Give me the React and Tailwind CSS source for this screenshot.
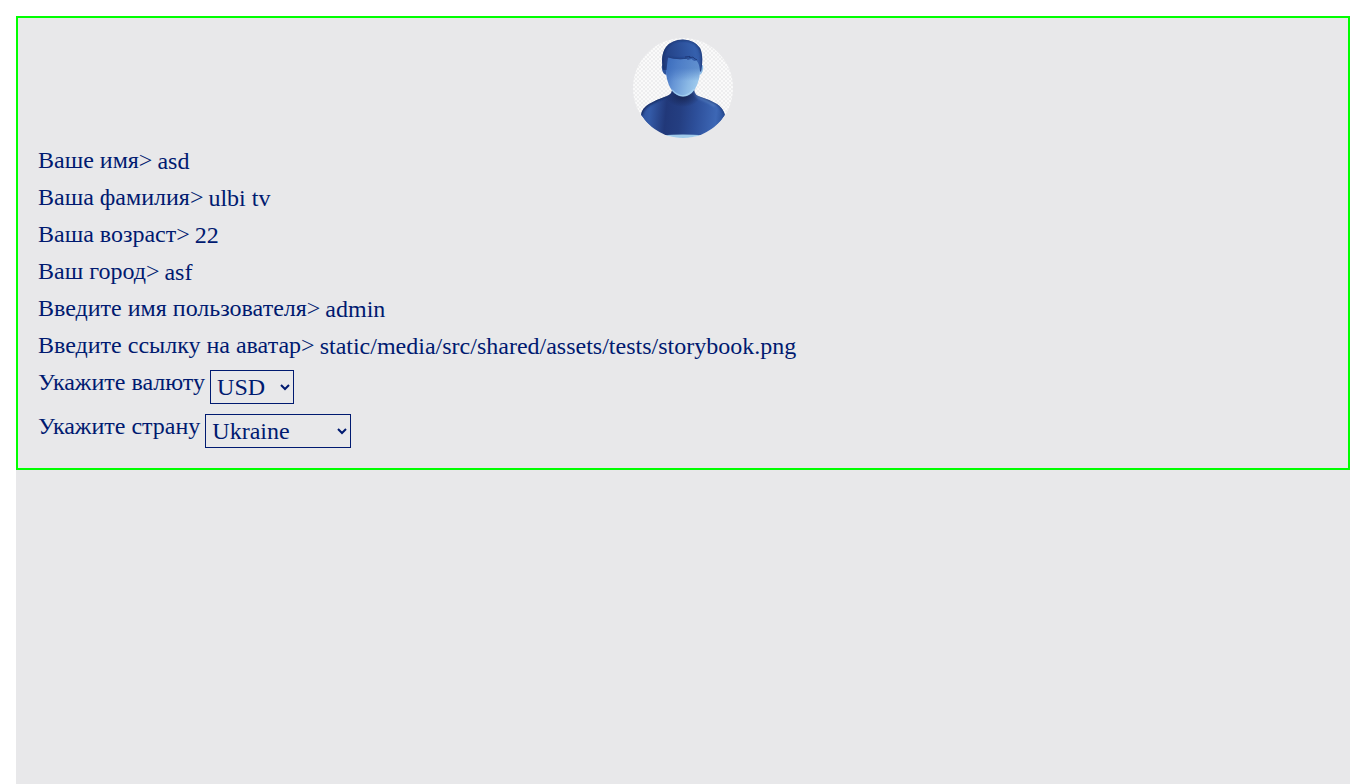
const fields = [
  ['Ваше имя>', 'asd'],
  ['Ваша фамилия>', 'ulbi tv'],
  ['Ваша возраст>', '22'],
  ['Ваш город>', 'asf'],
  ['Введите имя пользователя>', 'admin'],
  ['Введите ссылку на аватар>', 'static/media/src/shared/assets/tests/storybook.png'],
];

function Avatar() {
  return (
    <svg className="block size-[100px] rounded-full" viewBox="0 0 100 100" role="img">
      <defs>
        <pattern id="checks" width="4" height="4" patternUnits="userSpaceOnUse">
          <rect width="4" height="4" fill="#fafafa" />
          <rect width="2" height="2" fill="#eeeeef" />
          <rect x="2" y="2" width="2" height="2" fill="#eeeeef" />
        </pattern>
        <filter id="soft" x="-20%" y="-20%" width="140%" height="140%">
          <feGaussianBlur stdDeviation="0.9" />
        </filter>
        <linearGradient id="face" x1="0" y1="0.3" x2="1" y2="0.6">
          <stop offset="0" stopColor="#3f6fbe" />
          <stop offset="0.3" stopColor="#6594d5" />
          <stop offset="0.7" stopColor="#8ab8e5" />
          <stop offset="1" stopColor="#a2cdee" />
        </linearGradient>
        <linearGradient id="brow" x1="0" y1="0.3" x2="0" y2="1">
          <stop offset="0" stopColor="#3c6dbd" stopOpacity="0.6" />
          <stop offset="0.45" stopColor="#3c6dbd" stopOpacity="0" />
        </linearGradient>
        <linearGradient id="hair" x1="0" y1="0.5" x2="1" y2="0.35">
          <stop offset="0" stopColor="#1f3a7b" />
          <stop offset="0.4" stopColor="#2a4d96" />
          <stop offset="0.75" stopColor="#3560ad" />
          <stop offset="1" stopColor="#2a4d97" />
        </linearGradient>
        <linearGradient id="body" x1="0" y1="0.4" x2="1" y2="0.5">
          <stop offset="0.08" stopColor="#2c5099" />
          <stop offset="0.2" stopColor="#345ba8" />
          <stop offset="0.36" stopColor="#213879" />
          <stop offset="0.5" stopColor="#243e81" />
          <stop offset="0.66" stopColor="#2d4f9a" />
          <stop offset="0.86" stopColor="#3d67b5" />
          <stop offset="0.94" stopColor="#2b519b" />
        </linearGradient>
        <radialGradient id="neck" cx="0.5" cy="0.5" r="0.5">
          <stop offset="0" stopColor="#182654" />
          <stop offset="1" stopColor="#182654" stopOpacity="0" />
        </radialGradient>
        <clipPath id="torso">
          <path d="M39 50 Q40 55 34 58 Q25 61 16 66 Q9 70 8 77 Q18 92 30 97.5 H69 Q84 91 92 77 Q90 70 84 66 Q75 61 65 58 Q61 56 61 50Z" />
        </clipPath>
        <clipPath id="head">
          <path d="M30 32 Q27 17 33 9 Q39 1.5 50 1.5 Q62 2 67 10 Q71 18 68 34 L67 33 Q66.5 26 63.5 22.5 L61.5 23 Q60 22.3 58.5 21 L54 22 L55 20.7 Q43 22 35 19.5 Q34 27 33.5 32Z" />
        </clipPath>
      </defs>
      <rect width="100" height="100" fill="url(#checks)" />
      <g clipPath="url(#torso)">
        <rect width="100" height="100" fill="url(#body)" />
        <ellipse cx="50" cy="58" rx="17" ry="11" fill="url(#neck)" />
        <g filter="url(#soft)" fill="none">
          <path d="M34 57 Q25 61 16 66 Q9 70 8 77" stroke="#172a5d" strokeWidth="3" />
          <path d="M65 57 Q75 61 84 66 Q90 70 92 77" stroke="#213e7d" strokeWidth="2" />
          <path d="M62 52 Q62 58 67 60.5 Q76 64 82 68" stroke="#6f9bd5" strokeWidth="1.6" opacity="0.5" />
        </g>
      </g>
      <path d="M29 97.2 Q50 95.9 71 97.2 L65 100 H35Z" fill="#a0cbea" />
      <path d="M32.5 27 Q28.5 25 28.8 30 Q29.5 36 33.5 37Z" fill="#2c529c" />
      <path d="M67.2 27 Q70.6 26 70.2 30 Q69.5 36 66.5 37Z" fill="#8ebde6" />
      <path d="M33 18 Q32 31 34 41 Q37 53 44 57 Q50 60 56 57 Q63 53 66 41 Q68 31 67 18Z" fill="url(#face)" />
      <path d="M33 18 Q32 31 34 41 Q37 53 44 57 Q50 60 56 57 Q63 53 66 41 Q68 31 67 18Z" fill="url(#brow)" />
      <path d="M39 52 Q44 57.5 50 57.8 Q56 57.5 61 51" fill="none" stroke="#a9d5f4" strokeWidth="1.3" opacity="0.7" />
      <g clipPath="url(#head)">
        <rect x="25" width="50" height="40" fill="url(#hair)" />
        <g filter="url(#soft)" fill="none">
          <path d="M31 32 Q28 17 33 9 Q39 1.5 50 1.5 Q62 2 67 10 Q71 18 68 34" stroke="#1a2f68" strokeWidth="1.7" />
          <path d="M35 20 Q43 22.5 55 21" stroke="#1b326e" strokeWidth="1.8" />
        </g>
        <path d="M52 19 L57 18.4 L56.5 19.7 L60 19.1 L62 21 L64 21.7" fill="none" stroke="#1c3473" strokeWidth="1" opacity="0.8" />
      </g>
    </svg>
  );
}

function SelectRow({ label, value, width }) {
  return (
    <div className="flex items-start">
      <span className="mr-[5px]">{label}</span>
      <select
        defaultValue={value}
        className={`h-[34px] border border-[#001a70] bg-transparent px-[2px] ${width}`}
      >
        <option>{value}</option>
      </select>
    </div>
  );
}

export default function App() {
  return (
    <div className="h-[784px] overflow-hidden bg-white pt-4 pl-4 font-['Liberation_Serif',serif] text-[24px] leading-[24px] text-[#001a70]">
      <main className="h-full bg-[#e8e8ea]">
        <section className="flex flex-col gap-[10px] border-2 border-[#00ff00] p-5">
          <div className="flex justify-center">
            <Avatar />
          </div>
          {fields.map(([label, value]) => (
            <div key={label} className="flex h-[27px] items-start whitespace-nowrap">
              <span className="mr-[5px]">{label}</span>
              <span className="leading-[27px]">{value}</span>
            </div>
          ))}
          <SelectRow label="Укажите валюту" value="USD" width="w-[84px]" />
          <SelectRow label="Укажите страну" value="Ukraine" width="w-[146px]" />
        </section>
      </main>
    </div>
  );
}
